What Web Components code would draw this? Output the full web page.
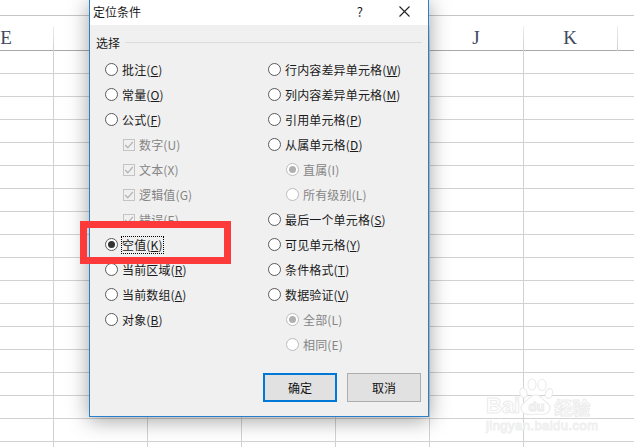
<!DOCTYPE html>
<html lang="zh">
<head>
<meta charset="utf-8">
<title>定位条件</title>
<style>
  html, body { margin: 0; height: 100%; overflow: hidden; background: #fff; }
  body { position: relative; width: 634px; height: 447px; font: 12px "Noto Sans CJK SC", "Noto Sans", sans-serif; color: #1a1a1a; }
</style>
</head>
<body>
<sheet-bg></sheet-bg>
<sheet-watermark></sheet-watermark>
<goto-dialog></goto-dialog>
<red-mark></red-mark>

<script>
class SheetBg extends HTMLElement {
  constructor() {
    super();
    this.attachShadow({ mode: 'open' });
  }

  connectedCallback() {
    const letters = ['E', 'F', 'G', 'H', 'I', 'J', 'K', 'L'];
    const shown = ['E', 'J', 'K'];
    const cols = letters.map((l) => `<div class="col">${shown.includes(l) ? l : ''}</div>`).join('');
    this.shadowRoot.innerHTML = `
      <style>
        :host { display: block; width: 634px; height: 447px; overflow: hidden; }
        .top { height: 15px; border-bottom: 1px solid #c6c6c6; }
        .head { display: grid; grid-template-columns: repeat(8, 94px); margin-left: -40px; height: 34px; border-bottom: 1px solid #a9a9a9; width: 800px; }
        .col { position: relative; text-align: center; font: 19px/26px "Liberation Serif", "DejaVu Serif", serif; color: #3f4a60; padding: 9px 2px 0 0; box-sizing: border-box; }
        .col::after { content: ""; position: absolute; right: 0; top: 10px; bottom: 0; width: 1px; background: linear-gradient(#eee, #cfcfcf); }
        .body {
          height: 400px;
          background-image:
            repeating-linear-gradient(to bottom, transparent 0 22px, #d2d2d2 22px 23px),
            repeating-linear-gradient(to right, transparent 0 93px, #d2d2d2 93px 94px);
          background-position: 0 0, -40px 0;
        }
      </style>
      <div class="top"></div>
      <div class="head">${cols}</div>
      <div class="body"></div>`;
  }
}

class SheetWatermark extends HTMLElement {
  constructor() {
    super();
    this.attachShadow({ mode: 'open' }).innerHTML = `
      <style>
        :host { position: absolute; left: 486px; top: 378px; width: 116px; height: 58px; color: #fff; }
        .row { display: flex; align-items: flex-end; height: 39px; }
        .big { font: bold 22px/22px "Liberation Sans", sans-serif; -webkit-text-stroke: 1px #ececec; }
        .cn { font: bold 18px/20px "Noto Sans CJK SC", sans-serif; -webkit-text-stroke: 1px #ececec; }
        svg { display: block; margin: 0 0 0 -1px; flex: none; }
        .url { font: 13px/14px "Liberation Sans", sans-serif; -webkit-text-stroke: 1px #efefef; letter-spacing: .45px; margin-top: 2px; white-space: nowrap; }
      </style>
      <div class="row">
        <span class="big">Bai</span>
        <svg width="35" height="39" viewBox="0 0 35 39" fill="#fff" stroke="#ececec" stroke-width="1.2">
          <ellipse cx="4.500" cy="15" rx="3.500" ry="5" transform="rotate(-15 4.500 15)"/>
          <ellipse cx="13" cy="6.500" rx="4" ry="5.500"/>
          <ellipse cx="23" cy="7" rx="4" ry="5.500"/>
          <ellipse cx="30" cy="15.500" rx="3.500" ry="5" transform="rotate(15 30 15.500)"/>
          <path d="M17 17c5 0 6 4 10 7 4 3 5 6 3 9-2 4-7 4-13 3-6 1-12 1-14-3-2-3-1-6 3-9 4-3 5-7 11-7z"/>
          <text x="17.500" y="33" text-anchor="middle" font-family="Liberation Sans, sans-serif" font-size="13" font-weight="700">du</text>
        </svg>
        <span class="cn">经验</span>
      </div>
      <div class="url">jingyan.baidu.com</div>`;
  }
}

class DlgRadio extends HTMLElement {
  constructor() {
    super();
    this.attachShadow({ mode: 'open' }).innerHTML = `
      <style>
        :host { display: flex; align-items: center; gap: 4px; height: 25px; white-space: nowrap; letter-spacing: .15px; }
        :host([sub]) { margin-left: 18px; }
        :host([disabled]) { color: #858585; }
        .dot { width: 13px; height: 13px; box-sizing: border-box; border: 1px solid #5a5a5a; border-radius: 50%; background: #fff; display: grid; place-items: center; flex: none; }
        :host([disabled]) .dot { border-color: #bcbcbc; }
        :host([checked]) .dot::after { content: ""; width: 7px; height: 7px; border-radius: 50%; background: #333; }
        :host([disabled][checked]) .dot::after { background: #b0b0b0; }
        .txt { line-height: 16px; }
        :host([focused]) .txt { outline: 1px dotted #000; }
      </style>
      <span class="dot"></span><span class="txt"><slot></slot></span>`;
  }
}

class DlgCheck extends HTMLElement {
  constructor() {
    super();
    this.attachShadow({ mode: 'open' }).innerHTML = `
      <style>
        :host { display: flex; align-items: center; gap: 4px; height: 25px; margin-left: 18px; color: #858585; white-space: nowrap; letter-spacing: .15px; }
        svg { display: block; flex: none; }
      </style>
      <svg width="12" height="12" viewBox="0 0 12 12">
        <rect x=".5" y=".5" width="11" height="11" fill="#f0f0f0" stroke="#c4c4c4"/>
        <path d="M2.200 6l2.600 2.800L9.800 3" fill="none" stroke="#b4b4b4" stroke-width="1.300"/>
      </svg>
      <span><slot></slot></span>`;
  }
}

class DlgButton extends HTMLElement {
  constructor() {
    super();
    this.attachShadow({ mode: 'open' }).innerHTML = `
      <style>
        :host { display: grid; place-items: center; box-sizing: border-box; width: 74px; height: 29px; background: #e1e1e1; border: 1px solid #adadad; color: #111; }
        :host([primary]) { border: 2px solid #0078d7; }
      </style>
      <slot></slot>`;
  }
}

class GotoDialog extends HTMLElement {
  constructor() {
    super();
    const u = (t, k) => `${t}(<u>${k}</u>)`;
    const r = (t, k, attrs = '') => `<dlg-radio ${attrs}>${u(t, k)}</dlg-radio>`;
    // disabled options have no access key underline in the dialog
    const off = (t, k, attrs = '') => `<dlg-radio sub disabled ${attrs}>${t}(${k})</dlg-radio>`;
    const c = (t, k) => `<dlg-check>${t}(${k})</dlg-check>`;
    this.attachShadow({ mode: 'open' }).innerHTML = `
      <style>
        :host { position: absolute; left: 89px; top: 0; width: 340px; height: 417px; box-sizing: border-box; border: 1px solid #2a7fcb; border-top: 0; background: #f0f0f0; box-shadow: 0 3px 20px rgba(0,0,0,.38); display: flex; flex-direction: column; }
        .title { flex: none; height: 25px; background: #fff; display: flex; align-items: center; padding-left: 3px; padding-bottom: 2px; box-sizing: border-box; }
        .title .name { flex: 1; }
        .help { font-size: 13px; margin-right: 36px; }
        .close { display: block; margin-right: 18px; }
        .legend { display: flex; align-items: center; gap: 5px; height: 22px; margin: 6px 6px 0 6px; }
        .legend i { flex: 1; height: 1px; background: #dcdcdc; }
        .cols { display: grid; grid-template-columns: 163px 1fr; padding: 4px 0 0 15px; height: 300px; box-sizing: border-box; }
        .btns { display: flex; gap: 10px; justify-content: flex-end; padding: 20px 7px 0 0; }
      </style>
      <div class="title">
        <span class="name">定位条件</span>
        <span class="help">?</span>
        <svg class="close" width="11" height="11" viewBox="0 0 11 11" fill="none" stroke="#222" stroke-width="1.100"><path d="M.5 .5l10 10M10.500 .5l-10 10"/></svg>
      </div>
      <div class="legend"><span>选择</span><i></i></div>
      <div class="cols">
        <div>
          ${r('批注', 'C')}${r('常量', 'O')}${r('公式', 'F')}
          ${c('数字', 'U')}${c('文本', 'X')}${c('逻辑值', 'G')}${c('错误', 'E')}
          ${r('空值', 'K', 'checked focused')}${r('当前区域', 'R')}${r('当前数组', 'A')}${r('对象', 'B')}
        </div>
        <div>
          ${r('行内容差异单元格', 'W')}${r('列内容差异单元格', 'M')}${r('引用单元格', 'P')}${r('从属单元格', 'D')}
          ${off('直属', 'I', 'checked')}${off('所有级别', 'L')}
          ${r('最后一个单元格', 'S')}${r('可见单元格', 'Y')}${r('条件格式', 'T')}${r('数据验证', 'V')}
          ${off('全部', 'L', 'checked')}${off('相同', 'E')}
        </div>
      </div>
      <div class="btns">
        <dlg-button primary>确定</dlg-button>
        <dlg-button>取消</dlg-button>
      </div>`;
  }
}

class RedMark extends HTMLElement {
  constructor() {
    super();
    this.attachShadow({ mode: 'open' }).innerHTML = `
      <style>
        :host { position: absolute; left: 80px; top: 221px; width: 151px; height: 43px; box-sizing: border-box; border: 7px solid #fd3a3a; }
      </style>`;
  }
}

customElements.define('sheet-bg', SheetBg);
customElements.define('sheet-watermark', SheetWatermark);
customElements.define('dlg-radio', DlgRadio);
customElements.define('dlg-check', DlgCheck);
customElements.define('dlg-button', DlgButton);
customElements.define('goto-dialog', GotoDialog);
customElements.define('red-mark', RedMark);
</script>
</body>
</html>
